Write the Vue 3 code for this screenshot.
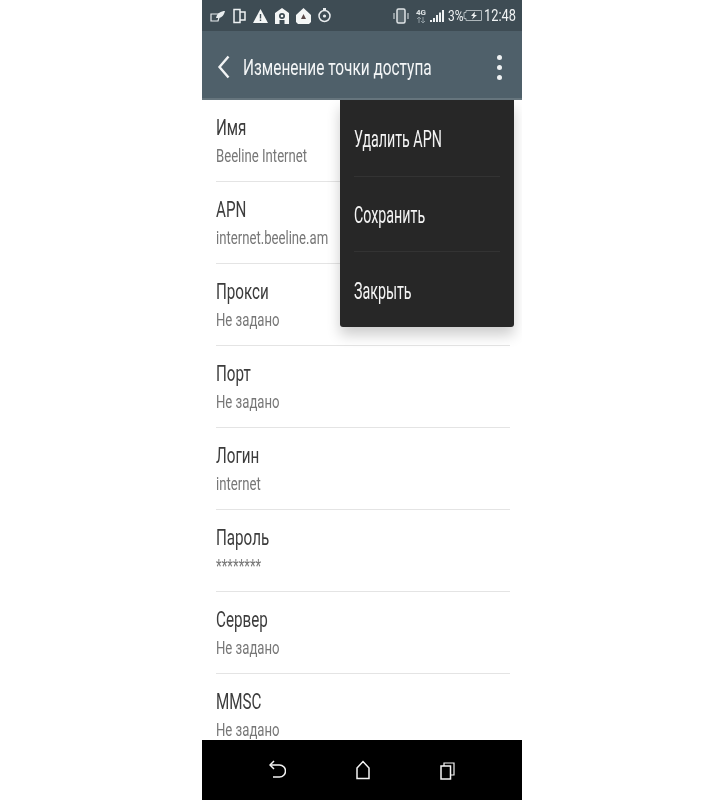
<script setup>
const rows = [
  ['Имя', 'Beeline Internet'],
  ['APN', 'internet.beeline.am'],
  ['Прокси', 'Не задано'],
  ['Порт', 'Не задано'],
  ['Логин', 'internet'],
  ['Пароль', '********'],
  ['Сервер', 'Не задано'],
  ['MMSC', 'Не задано'],
]
const menu = ['Удалить APN', 'Сохранить', 'Закрыть']
</script>

<template>
  <div class="page">
    <div class="phone">
      <div class="status">
        <div class="st-left">
          <svg width="16" height="14" viewBox="0 0 16 14"><path d="M1 5h9l-2 7H1z" fill="none" stroke="#e8ecee" stroke-width="1.2"/><path d="M6 9c1-5 5-7 9-7-1 4-3 7-7 7z" fill="#e8ecee"/></svg>
          <svg width="13" height="16" viewBox="0 0 13 16"><path d="M1 1.500h6v13H1zM7 4h5v8H7" fill="none" stroke="#eef1f2" stroke-width="1.500"/></svg>
          <svg width="15" height="14" viewBox="0 0 15 14"><path d="M7.500 0 15 14H0z" fill="#f4f6f6"/><path d="M6.800 5h1.400v4.500H6.800zM6.800 10.500h1.400V12H6.800z" fill="#3d4b53"/></svg>
          <svg width="14" height="16" viewBox="0 0 14 16"><path d="M7 0 14 5v11H9.500v-4h-5v4H0V5z" fill="#f4f6f6"/><circle cx="7" cy="8" r="3" fill="#3d4b53"/><circle cx="7" cy="8" r="1.300" fill="#f4f6f6"/></svg>
          <svg width="15" height="16" viewBox="0 0 15 16"><path d="M7.500 0 15 7v7l-2 2H2l-2-2V7z" fill="#f4f6f6"/><path d="M7.500 6 10 11H5z" fill="#5b4a48"/></svg>
          <svg width="13" height="15" viewBox="0 0 13 15"><circle cx="6.500" cy="8" r="5.500" fill="none" stroke="#e8ecee" stroke-width="1.500"/><circle cx="6.500" cy="8" r="1.600" fill="#e8ecee"/><path d="M5 0h3v3H5z" fill="#e8ecee"/></svg>
        </div>
        <div class="st-right">
          <svg class="vib" width="16" height="16" viewBox="0 0 16 16"><rect x="4" y="1" width="8" height="14" rx="1.500" fill="#59676e" stroke="#dfe4e6" stroke-width="1.500"/><path d="M1 5v6M15 5v6" stroke="#aab3b7" stroke-width="1.500"/></svg>
          <span class="net"><b>4G</b><svg width="8" height="6" viewBox="0 0 8 6"><path d="M2 0v6M6 0v6M0 2l2-2 2 2M4 4l2 2 2-2" fill="none" stroke="#8f9ba1" stroke-width="1"/></svg></span>
          <svg class="signal" width="14" height="12" viewBox="0 0 14 12"><path d="M0 10h2v2H0zM3 8h2v4H3zM6 5h2v7H6zM9 2.500h2V12H9zM12 0h2v12h-2z" fill="#eef1f2"/></svg>
          <span class="pct"><span>3%</span></span>
          <svg class="batt" width="19" height="11" viewBox="0 0 19 11"><path d="M3 .5h15.500v10H3V8.500H1V2.500h2z" fill="none" stroke="#aeb7bb" stroke-width="1"/><path d="M12 1.500 8 6h2.500L9 9.500 14 5h-2.500z" fill="#eef1f2"/></svg>
          <span class="time"><span>12:48</span></span>
        </div>
      </div>

      <div class="toolbar">
        <svg class="chev" width="14" height="24" viewBox="0 0 14 24"><path d="M11.500 1.500 2.500 12l9 10.500" fill="none" stroke="#f2f4f5" stroke-width="2.400"/></svg>
        <span class="title"><span>Изменение точки доступа</span></span>
        <div class="dots"><i></i><i></i><i></i></div>
      </div>

      <div class="body">
        <div class="list">
          <div v-for="r in rows" :key="r[0]" class="row">
            <div class="label"><span>{{ r[0] }}</span></div>
            <div class="value"><span>{{ r[1] }}</span></div>
          </div>
        </div>
        <div class="menu">
          <div v-for="m in menu" :key="m" class="item"><span>{{ m }}</span></div>
        </div>
      </div>

      <div class="nav">
        <svg width="17" height="20" viewBox="0 0 17 20"><path d="M1 5h9.500a5.500 5.500 0 0 1 0 12H4" fill="none" stroke="#f5f5f5" stroke-width="1.500"/><path d="M5 1 1 5l4 4" fill="none" stroke="#f5f5f5" stroke-width="1.500"/></svg>
        <svg width="14" height="20" viewBox="0 0 14 20"><path d="M1 8 7 1.500 13 8v10.500H1z" fill="none" stroke="#f5f5f5" stroke-width="1.500"/></svg>
        <svg width="15" height="19" viewBox="0 0 15 19"><path d="M1 5h9.500v13H1z" fill="none" stroke="#f5f5f5" stroke-width="1.500"/><path d="M4 5V2h10v12h-3.500" fill="none" stroke="#f5f5f5" stroke-width="1.200"/></svg>
      </div>
    </div>
  </div>
</template>

<style scoped>
.page {
  width: 724px;
  height: 801px;
  background: #fff;
  display: flex;
  justify-content: center;
  font-family: Roboto, "Noto Sans", sans-serif;
  overflow: hidden;
}
.phone {
  width: 320px;
  height: 800px;
  display: flex;
  flex-direction: column;
  filter: blur(0.4px);
}
.status {
  height: 31px;
  background: #3e4c54;
  display: flex;
  align-items: center;
  justify-content: space-between;
  padding: 0 6px 0 8px;
}
.st-left { display: flex; align-items: center; gap: 7px; }
.st-right { display: flex; align-items: center; color: #f0f3f4; }
.vib { margin-right: 7px; }
.net { display: flex; flex-direction: column; align-items: center; margin-right: 4px; }
.net b { font-size: 8px; line-height: 9px; font-weight: 700; color: #dfe4e6; }
.signal { margin-right: 4px; }
.pct { font-size: 15px; width: 14px; margin-right: 1px; }
.pct span, .time span { display: inline-block; white-space: nowrap; transform-origin: left center; }
.pct span { transform: scaleX(.8); }
.batt { margin-right: 2px; }
.time { font-size: 16px; width: 32px; }
.time span { transform: scaleX(.8); }
.toolbar {
  height: 69px;
  background: #4f606a;
  border-bottom: 2px solid #66757d;
  box-sizing: border-box;
  display: flex;
  align-items: center;
  padding: 6px 20px 0 15px;
  color: #f4f6f7;
}
.chev { margin-right: 12px; flex: none; margin-top: -1px; }
.title {
  flex: 1;
  min-width: 0;
  font-size: 22px;
}
.title span { display: inline-block; white-space: nowrap; transform: scaleX(.7); transform-origin: left center; }
.dots { display: flex; flex-direction: column; gap: 5px; margin-top: -1px; }
.dots i { width: 5px; height: 5px; border-radius: 50%; background: #eef1f2; display: block; }
.body {
  height: 640px;
  position: relative;
  overflow: hidden;
  background: #fff;
}
.list { padding: 0 12px 0 14px; }
.row {
  height: 82px;
  box-sizing: border-box;
  border-bottom: 1px solid #e4e4e4;
  padding-top: 15px;
}
.row:last-child { border-bottom: 0; }
.label { font-size: 22px; line-height: 26px; color: #3c3c3c; height: 31px; }
.value { font-size: 18px; line-height: 20px; color: #777; }
.label span, .value span, .item span {
  display: inline-block;
  white-space: nowrap;
  transform-origin: left center;
}
.label span { transform: scaleX(.69); }
.value span { transform: scaleX(.73); }
.item span { transform: scaleX(.62); }
.menu {
  position: absolute;
  left: 138px;
  top: 0;
  width: 174px;
  height: 227px;
  background: #272727;
  border-radius: 0 0 3px 3px;
  box-shadow: 0 8px 14px rgba(0, 0, 0, .2);
  padding: 2px 14px 0;
  box-sizing: border-box;
}
.item {
  height: 75px;
  box-sizing: border-box;
  border-bottom: 1px solid #333;
  display: flex;
  align-items: center;
  font-size: 23px;
  color: #f4f4f4;
}
.item:nth-child(2) { padding-top: 2px; }
.item:last-child { border-bottom: 0; padding-top: 4px; }
.nav {
  height: 60px;
  background: #000;
  display: flex;
  align-items: center;
  justify-content: space-between;
  padding: 0 67px 0 67px;
}
</style>
